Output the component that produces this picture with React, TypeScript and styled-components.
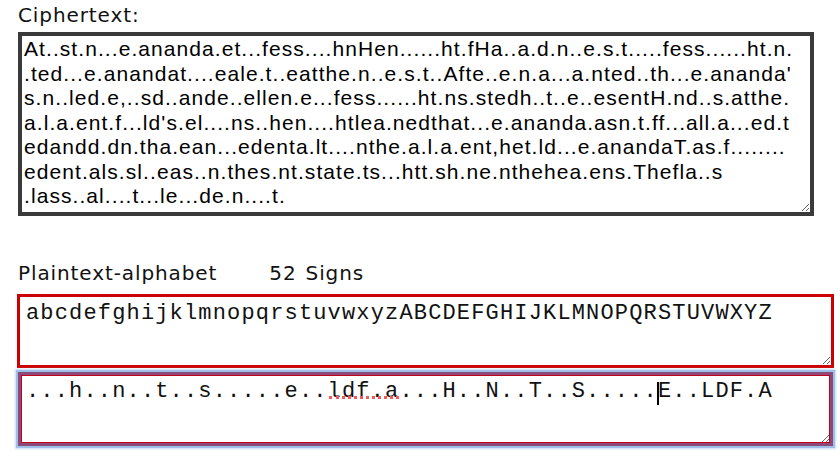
import React, { useEffect, useRef } from "react";
import styled, { createGlobalStyle } from "styled-components";

const GlobalStyle = createGlobalStyle`
  html, body {
    margin: 0;
    padding: 0;
    background: #ffffff;
  }
  * {
    box-sizing: border-box;
  }
`;

const Page = styled.div`
  padding: 2px 0 0 18px;
  width: 840px;
  height: 460px;
  overflow: hidden;
`;

const Label = styled.div`
  font-family: "DejaVu Sans", Verdana, sans-serif;
  font-size: 20px;
  letter-spacing: 0.9px;
  color: #111;
  height: 26px;
  display: flex;
  align-items: center;
  gap: 52px;
`;

const Count = styled.span`
  display: inline-flex;
  gap: 9px;
`;

const CipherArea = styled.textarea`
  display: block;
  margin-top: 4px;
  width: 796px;
  height: 184px;
  border: 4px solid #3a3a3a;
  padding: 1px 2px;
  font-family: "Liberation Sans", Arial, sans-serif;
  font-size: 21px;
  letter-spacing: 1.07px;
  line-height: 24.5px;
  color: #000;
  white-space: pre-wrap;
  overflow: hidden;
  outline: none;
`;

const Section = styled.div`
  margin-top: 44px;
`;

const AlphaArea = styled.textarea<{ $focused?: boolean }>`
  display: block;
  margin-left: ${({ $focused }) => ($focused ? "0" : "-1px")};
  margin-top: ${({ $focused }) => ($focused ? "4px" : "8px")};
  width: ${({ $focused }) => ($focused ? "815px" : "817px")};
  height: 74px;
  border: 3px solid ${({ $focused }) => ($focused ? "#8c4a78" : "#cc0000")};
  box-shadow: ${({ $focused }) =>
    $focused ? "inset 0 0 0 1px #c4001c, 0 0 0 2px #9ebfe9, 0 0 2px 3px #c9dcf4" : "none"};
  padding: 4px 6px 0 ${({ $focused }) => ($focused ? "5px" : "6px")};
  font-family: "Liberation Mono", "Courier New", monospace;
  font-size: 22px;
  letter-spacing: 1.16px;
  line-height: 26px;
  color: #111;
  overflow: hidden;
  outline: none;
  caret-color: transparent;
`;

const Wrap = styled.div`
  position: relative;
`;

const SpellMark = styled.span`
  position: absolute;
  left: 311px;
  top: 24px;
  width: 70px;
  height: 3px;
  border-bottom: 3px dotted #f05a5a;
  pointer-events: none;
`;

const Caret = styled.span`
  position: absolute;
  left: 639px;
  top: 10px;
  width: 2px;
  height: 23px;
  background: #000;
  pointer-events: none;
`;

const cipher = [
  "At..st.n...e.ananda.et...fess....hnHen......ht.fHa..a.d.n..e.s.t.....fess......ht.n.",
  ".ted...e.anandat....eale.t..eatthe.n..e.s.t..Afte..e.n.a...a.nted..th...e.ananda'",
  "s.n..led.e,..sd..ande..ellen.e...fess......ht.ns.stedh..t..e..esentH.nd..s.atthe.",
  "a.l.a.ent.f...ld's.el....ns..hen....htlea.nedthat...e.ananda.asn.t.ff...all.a...ed.t",
  "edandd.dn.tha.ean...edenta.lt....nthe.a.l.a.ent,het.ld...e.anandaT.as.f........",
  "edent.als.sl..eas..n.thes.nt.state.ts...htt.sh.ne.nthehea.ens.Thefla..s",
  ".lass..al....t...le...de.n....t.",
].join("\n");

const plainAlphabet = "abcdefghijklmnopqrstuvwxyzABCDEFGHIJKLMNOPQRSTUVWXYZ";
const keyAlphabet = "...h..n..t..s.....e..ldf.a...H..N..T..S.....E..LDF.A";

export default function App() {
  const keyRef = useRef<HTMLTextAreaElement>(null);

  useEffect(() => {
    const el = keyRef.current;
    if (el) {
      const pos = keyAlphabet.indexOf("E");
      el.focus();
      el.setSelectionRange(pos, pos);
    }
  }, []);

  return (
    <>
      <GlobalStyle />
      <Page>
        <Label>Ciphertext:</Label>
        <CipherArea defaultValue={cipher} spellCheck={false} />
        <Section>
          <Label>
            <span>Plaintext-alphabet</span>
            <Count>
              <span>52</span>
              <span>Signs</span>
            </Count>
          </Label>
          <AlphaArea defaultValue={plainAlphabet} spellCheck={false} />
          <Wrap>
            <AlphaArea ref={keyRef} $focused defaultValue={keyAlphabet} spellCheck={false} />
            <SpellMark />
            <Caret />
          </Wrap>
        </Section>
      </Page>
    </>
  );
}
